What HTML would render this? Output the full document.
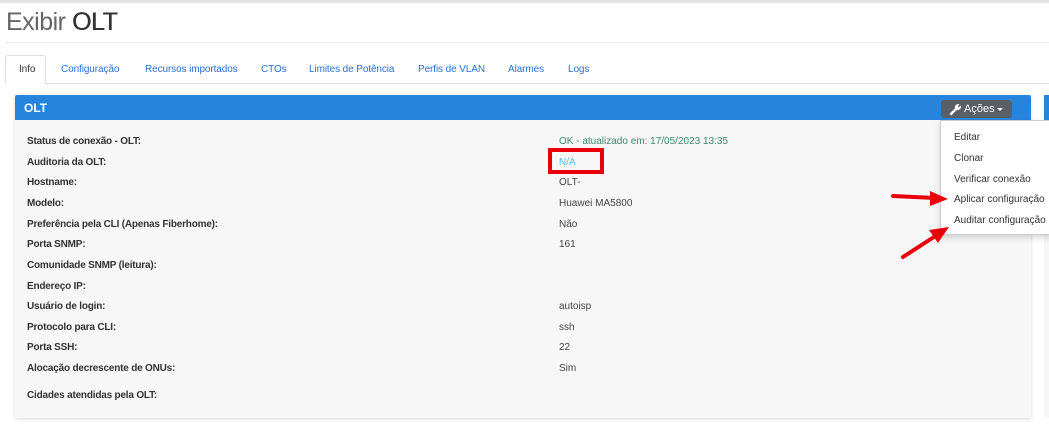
<!DOCTYPE html>
<html><head><meta charset="utf-8"><style>
*{box-sizing:border-box;margin:0;padding:0}
body{width:1049px;height:431px;overflow:hidden;background:#fff;font-family:"Liberation Sans",sans-serif;position:relative}
.topbar{position:absolute;left:0;top:0;width:1049px;height:3px;background:#e4e4e4}
h1{position:absolute;left:6px;top:8px;font-weight:normal;font-size:25px;color:#666;letter-spacing:-0.5px}
h1 b{font-weight:normal;color:#333;text-shadow:0.4px 0 0 #333}
.hr{position:absolute;left:5px;top:42px;width:1044px;height:1px;background:#eee}
.tabs{position:absolute;left:5px;top:83px;width:1044px;height:1px;background:#ddd}
.tab{position:absolute;top:64px;font-size:10px;color:#2a6fd6;letter-spacing:-0.1px}
.tabact{position:absolute;left:5px;top:55px;width:41px;height:29px;border:1px solid #ddd;border-bottom:1px solid #fff;border-radius:3px 3px 0 0;background:#fff}
.panel{position:absolute;left:15px;top:95px;width:1016px;height:323px;background:#f7f7f7;box-shadow:0 1px 4px rgba(0,0,0,.15)}
.ph{position:absolute;left:15px;top:95px;width:1016px;height:25px;background:#2784dd;border-radius:2px 2px 0 0}
.ph span{position:absolute;left:9px;top:6px;color:#fff;font-weight:bold;font-size:12px}
.rp{position:absolute;left:1044px;top:95px;width:5px;height:323px;background:#f7f7f7}
.rph{position:absolute;left:1044px;top:95px;width:5px;height:25px;background:#2784dd}
.btn{position:absolute;left:941px;top:100px;width:71px;height:18px;background:#5a5f66;border-radius:3px;color:#fff;font-size:11px}
.l{position:absolute;left:27px;font-size:10px;font-weight:bold;color:#333;letter-spacing:-0.2px}
.v{position:absolute;left:559px;font-size:10px;color:#444}
.dd{position:absolute;left:940px;top:120px;width:112px;height:115px;background:#fff;border:1px solid #ccc;box-shadow:0 3px 6px rgba(0,0,0,.15)}
.di{position:absolute;left:954px;font-size:10px;color:#333}
.red{position:absolute;left:548px;top:148px;width:56px;height:26px;border:4px solid #e8000b}
</style></head><body>
<div class="topbar"></div>
<h1>Exibir <b>OLT</b></h1>
<div class="hr"></div>
<div class="tabs"></div>
<div class="tabact"></div>
<div class="tab" style="left:19px;color:#333">Info</div>
<div class="tab" style="left:61px">Configuração</div>
<div class="tab" style="left:145px">Recursos importados</div>
<div class="tab" style="left:261px">CTOs</div>
<div class="tab" style="left:309px">Limites de Potência</div>
<div class="tab" style="left:418px">Perfis de VLAN</div>
<div class="tab" style="left:508px">Alarmes</div>
<div class="tab" style="left:568px">Logs</div>
<div class="panel"></div>
<div class="ph"><span>OLT</span></div>
<div class="rp"></div><div class="rph"></div>
<div class="btn"><svg style="position:absolute;left:8px;top:3px" width="13" height="13" viewBox="0 0 13 13"><path d="M2 11 L7 6" stroke="#fff" stroke-width="2.4" stroke-linecap="round"/><path d="M6 5.5 A3.5 3.5 0 0 1 10.5 1.2 L8.8 3.2 L9.8 4.2 L11.8 2.5 A3.5 3.5 0 0 1 7.5 7 Z" fill="#fff"/></svg><span style="position:absolute;left:23px;top:3px">Ações</span><span style="position:absolute;left:56px;top:8px;border-left:3px solid transparent;border-right:3px solid transparent;border-top:3px solid #fff"></span></div>
<div class="l" style="top:136px">Status de conexão - OLT:</div>
<div class="l" style="top:157px">Auditoria da OLT:</div>
<div class="l" style="top:177px">Hostname:</div>
<div class="l" style="top:198px">Modelo:</div>
<div class="l" style="top:219px">Preferência pela CLI (Apenas Fiberhome):</div>
<div class="l" style="top:239px">Porta SNMP:</div>
<div class="l" style="top:260px">Comunidade SNMP (leitura):</div>
<div class="l" style="top:281px">Endereço IP:</div>
<div class="l" style="top:301px">Usuário de login:</div>
<div class="l" style="top:322px">Protocolo para CLI:</div>
<div class="l" style="top:342px">Porta SSH:</div>
<div class="l" style="top:363px">Alocação decrescente de ONUs:</div>
<div class="l" style="top:390px">Cidades atendidas pela OLT:</div>
<div class="v" style="top:136px;color:#3a8a6a">OK - atualizado em: 17/05/2023 13:35</div>
<div class="v" style="top:157px;color:#5bc0de">N/A</div>
<div class="v" style="top:177px">OLT-</div>
<div class="v" style="top:198px">Huawei MA5800</div>
<div class="v" style="top:219px">Não</div>
<div class="v" style="top:239px">161</div>
<div class="v" style="top:301px">autoisp</div>
<div class="v" style="top:322px">ssh</div>
<div class="v" style="top:342px">22</div>
<div class="v" style="top:363px">Sim</div>
<div class="red"></div>
<div class="dd"></div>
<div class="di" style="top:132px">Editar</div>
<div class="di" style="top:153px">Clonar</div>
<div class="di" style="top:174px">Verificar conexão</div>
<div class="di" style="top:194px">Aplicar configuração</div>
<div class="di" style="top:215px">Auditar configuração</div>
<svg style="position:absolute;left:0;top:0" width="1049" height="431">
<path d="M893 196 L935 198" stroke="#e8000b" stroke-width="4" stroke-linecap="round"/>
<polygon points="948,199 930,191 930,206" fill="#e8000b"/>
<path d="M903 257 L937 235" stroke="#e8000b" stroke-width="4" stroke-linecap="round"/>
<polygon points="949,227 929,230 938,243" fill="#e8000b"/>
</svg>
</body></html>
